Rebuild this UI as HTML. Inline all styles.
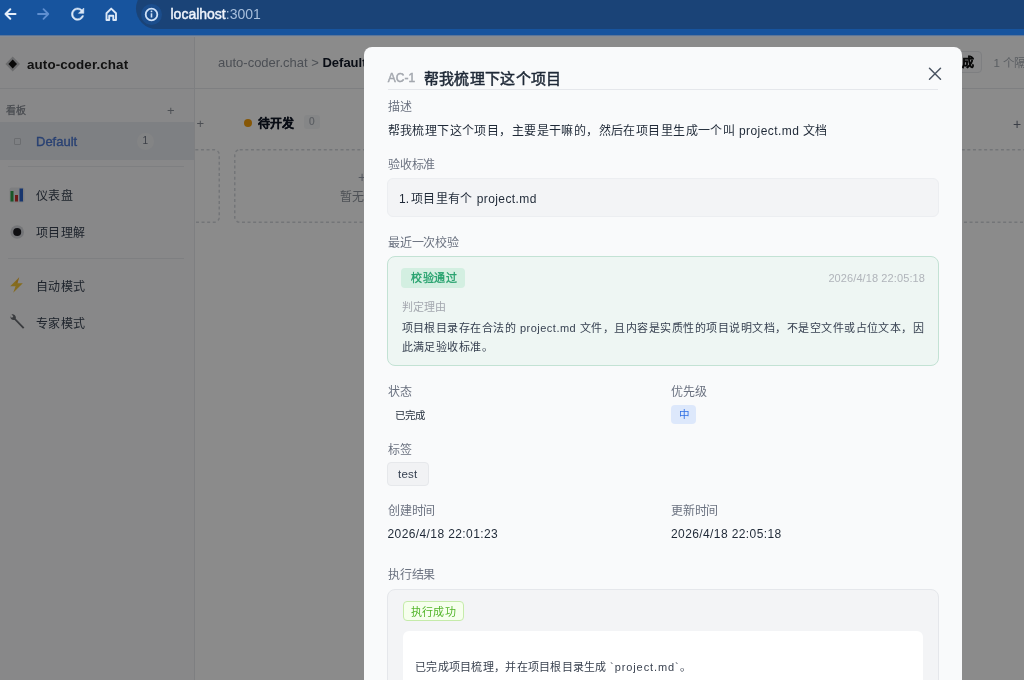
<!DOCTYPE html>
<html lang="zh-CN"><head><meta charset="utf-8">
<style>
*{box-sizing:border-box}
html,body{margin:0;padding:0}
body{width:1024px;height:680px;overflow:hidden;position:relative;font-family:"Liberation Sans",sans-serif;background:#fff}
.a{position:absolute;white-space:nowrap}
.g{will-change:transform}
.lb{font-size:12px;letter-spacing:-0.2px;line-height:14px;color:#6b7280}
</style></head><body><div class="g" style="position:absolute;left:0;top:0;width:1024px;height:680px;overflow:hidden">
<!-- toolbar -->
<div class="a" style="left:0;top:0;width:1024px;height:35px;background:#17549e"></div>
<div class="a" style="left:136px;top:-12px;width:920px;height:41px;background:#1a4377;border-radius:21px"></div>
<div class="a" style="left:141px;top:4px;width:21px;height:21px;border-radius:50%;background:#1b4d8c"></div>
<svg class="a" style="left:0;top:0" width="136" height="35" viewBox="0 0 136 35">
 <g fill="none" stroke="#e6effa" stroke-width="2" stroke-linecap="round" stroke-linejoin="round">
  <path d="M15.5 14H5.5M10.3 9.2L5.5 14L10.3 18.8"/>
 </g>
 <g fill="none" stroke="#5f8fd0" stroke-width="1.8" stroke-linecap="round" stroke-linejoin="round">
  <path d="M38 14H48.3M43.5 9.2L48.3 14L43.5 18.8"/>
 </g>
 <g transform="translate(68.4 4.9) scale(0.77)" fill="#dce8f7" stroke="#dce8f7" stroke-width="0.7">
  <path d="M17.65 6.35A7.958 7.958 0 0 0 12 4c-4.42 0-7.99 3.58-7.99 8s3.57 8 7.99 8c3.73 0 6.84-2.55 7.73-6h-2.08A5.99 5.99 0 0 1 12 18c-3.31 0-6-2.690-6-6s2.69-6 6-6c1.66 0 3.14.69 4.22 1.78L13 11h7V4l-2.35 2.35z" transform="rotate(0 12 12)"/>
 </g>
 <g fill="none" stroke="#dce8f7" stroke-width="1.9" stroke-linejoin="round">
  <path d="M106.5 20V13.2L111.2 8.6L116 13.2V20H113.3V15.8H109.2V20Z"/>
 </g>
</svg>
<svg class="a" style="left:141px;top:4px" width="21" height="21" viewBox="0 0 21 21">
 <circle cx="10.5" cy="10.5" r="5.8" fill="none" stroke="#cfe1f7" stroke-width="1.8"/>
 <rect x="9.7" y="9.3" width="1.6" height="4.2" fill="#cfe1f7"/>
 <circle cx="10.5" cy="7.4" r="0.9" fill="#cfe1f7"/>
</svg>
<div class="a" style="left:170.5px;top:6px;font-size:14px;line-height:17px;color:#eef3fb;-webkit-text-stroke:0.45px #eef3fb">localhost<span style="color:#a8bfdc;-webkit-text-stroke:0">:3001</span></div>

<!-- page main -->
<div class="a" style="left:0;top:35px;width:1024px;height:645px;background:#fdfdfd"></div>
<div class="a" style="left:195px;top:88px;width:829px;height:1px;background:#e5e7eb"></div>
<div class="a" style="left:218px;top:55px;font-size:13px;line-height:15px;color:#8b919b">auto-coder.chat &gt; <span style="color:#111827;font-weight:bold">Default</span></div>
<div class="a" style="left:930px;top:51px;width:52px;height:22px;border:1px solid #e5e7eb;border-radius:4px;background:#f9fafb"></div>
<div class="a" style="left:962px;top:55.5px;font-size:12px;line-height:15px;color:#111;font-weight:bold;-webkit-text-stroke:0.3px #111">成</div>
<div class="a" style="left:993.5px;top:56px;font-size:11.5px;line-height:14px;color:#a5abb3">1 个隔离</div>
<div class="a" style="left:196.5px;top:116.5px;font-size:13px;line-height:14px;color:#8b919a">+</div>
<svg class="a" style="left:100px;top:148.5px" width="120" height="74"><rect x="0.75" y="0.75" width="118.5" height="72.5" rx="5" fill="none" stroke="#d2d5da" stroke-width="1.5" stroke-dasharray="3 2.6"/></svg>
<div class="a" style="left:243.5px;top:118.5px;width:8.3px;height:8.3px;border-radius:50%;background:#f59e0b"></div>
<div class="a" style="left:257.5px;top:116.5px;font-size:12px;letter-spacing:0.3px;line-height:15px;color:#111827;font-weight:bold;-webkit-text-stroke:0.25px #111827">待开发</div>
<div class="a" style="left:304px;top:115px;width:15.5px;height:13.5px;border-radius:3px;background:#f3f4f6;font-size:10px;line-height:13.5px;text-align:center;color:#a5abb3;-webkit-text-stroke:0.2px #a5abb3">0</div>
<svg class="a" style="left:234px;top:148.5px" width="300" height="74"><rect x="0.75" y="0.75" width="298.5" height="72.5" rx="5" fill="none" stroke="#d2d5da" stroke-width="1.5" stroke-dasharray="3 2.6"/></svg>
<div class="a" style="left:340px;top:189.5px;font-size:12px;line-height:14px;color:#8e949d">暂无</div>
<div class="a" style="left:358px;top:170px;font-size:14px;line-height:14px;color:#9ca3af">+</div>
<div class="a" style="left:1013px;top:117px;font-size:14px;line-height:14px;color:#6b7280">+</div>
<svg class="a" style="left:900px;top:148.5px" width="300" height="74"><rect x="0.75" y="0.75" width="298.5" height="72.5" rx="5" fill="none" stroke="#d2d5da" stroke-width="1.5" stroke-dasharray="3 2.6"/></svg>

<!-- sidebar -->
<div class="a" style="left:0;top:35px;width:195px;height:645px;background:#f8f8f9;border-right:1px solid #e5e7eb"></div>
<div class="a" style="left:0;top:88px;width:194px;height:1px;background:#e5e7eb"></div>
<svg class="a" style="left:5px;top:56px" width="16" height="16" viewBox="0 0 16 16">
 <path d="M7.7 0.6L15 8L7.7 15.4L0.4 8Z" fill="#c4c5c8"/>
 <path d="M7.7 3.6L12 8L7.7 12.4L3.4 8Z" fill="#111"/>
</svg>
<div class="a" style="left:27px;top:56.5px;font-size:13.4px;line-height:16px;font-weight:bold;color:#222;letter-spacing:0.1px">auto-coder.chat</div>
<div class="a" style="left:5.5px;top:104.8px;font-size:10px;letter-spacing:0px;line-height:12px;color:#80868f;-webkit-text-stroke:0.25px #80868f">看板</div>
<div class="a" style="left:167px;top:104px;font-size:13px;line-height:14px;color:#8b919a">+</div>
<div class="a" style="left:0;top:122px;width:194px;height:38px;background:#e6e9ee"></div>
<div class="a" style="left:13.5px;top:138px;width:7px;height:7px;border:1px solid #c4c7cc;border-radius:1px"></div>
<div class="a" style="left:36px;top:134px;font-size:13px;line-height:15px;color:#4a76d0;-webkit-text-stroke:0.35px #4a76d0">Default</div>
<div class="a" style="left:137px;top:133px;width:16.5px;height:16.5px;border-radius:50%;background:#eff0f2;font-size:10px;line-height:16.5px;text-align:center;color:#6b7280">1</div>
<div class="a" style="left:8px;top:166px;width:176px;height:1px;background:#e5e7eb"></div>
<div class="a" style="left:36.3px;top:188.5px;font-size:12px;letter-spacing:0.2px;line-height:15px;color:#374151">仪表盘</div>
<div class="a" style="left:36.3px;top:226.4px;font-size:12px;letter-spacing:0.2px;line-height:15px;color:#374151">项目理解</div>
<div class="a" style="left:8px;top:258px;width:176px;height:1px;background:#e5e7eb"></div>
<div class="a" style="left:36.3px;top:279.7px;font-size:12px;letter-spacing:0.2px;line-height:15px;color:#374151">自动模式</div>
<div class="a" style="left:36.3px;top:316.8px;font-size:12px;letter-spacing:0.2px;line-height:15px;color:#374151">专家模式</div>
<svg class="a" style="left:9px;top:187px" width="16" height="16" viewBox="0 0 16 16">
 <rect x="0.5" y="0.5" width="15" height="15" rx="2" fill="#e4e6ea"/>
 <rect x="1.5" y="4" width="3" height="10.5" fill="#2e9e48"/>
 <rect x="6" y="8" width="3" height="6.5" fill="#c9302c"/>
 <rect x="10.5" y="1.5" width="3.5" height="13" fill="#2a62c9"/>
</svg>
<svg class="a" style="left:10px;top:225px" width="15" height="15" viewBox="0 0 15 15">
 <circle cx="7.2" cy="7" r="6.8" fill="#d3d5da"/>
 <circle cx="7.2" cy="7" r="4" fill="#1d1d22"/>
</svg>
<svg class="a" style="left:9px;top:276.5px" width="15" height="16" viewBox="0 0 15 16">
 <path d="M10.2 0.3L1.2 9.2H6.6L4.2 15.7L13.8 6.2H8.4Z" fill="#f3c53a"/>
 <path d="M10.2 0.3L6.6 5.5L8.4 6.2Z" fill="#f0a030" opacity="0.6"/>
</svg>
<svg class="a" style="left:8px;top:312.5px" width="18" height="18" viewBox="0 0 18 18">
 <path d="M2.2 2.5A3.6 3.6 0 0 0 6.6 6.9L15 15.8L16.4 14.4L7.8 5.8A3.6 3.6 0 0 0 3.4 1.3L5.3 3.3L4.5 4.6L2.6 4.4Z" fill="#6b6e74"/>
</svg>

<!-- overlay -->
<div class="a" style="left:0;top:35px;width:1024px;height:645px;background:rgba(0,0,0,0.45)"></div>
<div class="a" style="left:0;top:35px;width:1024px;height:1px;background:#5d7596"></div>
<div class="a" style="left:0;top:36px;width:1024px;height:1px;background:#838b96"></div>

<!-- modal -->
<div class="a" style="left:364px;top:47px;width:598px;height:700px;background:#f9fafb;border-radius:8px"></div>
<div class="a" style="left:387.8px;top:70.5px;font-size:12px;line-height:14px;color:#a3a7ae;-webkit-text-stroke:0.45px #a3a7ae;letter-spacing:0px">AC-1</div>
<div class="a" style="left:423.5px;top:70px;font-size:15px;line-height:18px;letter-spacing:0.35px;color:#1f2937;-webkit-text-stroke:0.5px #1f2937">帮我梳理下这个项目</div>
<svg class="a" style="left:928px;top:67px" width="14" height="14" viewBox="0 0 14 14"><path d="M1.5 1.2L12.5 12.2M12.5 1.2L1.5 12.2" stroke="#4b5563" stroke-width="1.5" fill="none" stroke-linecap="round"/></svg>
<div class="a" style="left:388px;top:89px;width:550px;height:1px;background:#e5e7eb"></div>

<div class="a lb" style="left:388px;top:100px">描述</div>
<div class="a" style="left:387.5px;top:123px;font-size:12px;letter-spacing:0.42px;line-height:16px;color:#1f2937">帮我梳理下这个项目，主要是干嘛的，然后在项目里生成一个叫 project.md 文档</div>

<div class="a lb" style="left:388px;top:158px">验收标准</div>
<div class="a" style="left:387px;top:178px;width:552px;height:39px;background:#f3f4f6;border:1px solid #eceef1;border-radius:6px"></div>
<div class="a" style="left:399px;top:190.5px;font-size:12px;letter-spacing:0.42px;line-height:16px;color:#1f2937"><span style="display:inline-block;width:11.8px;letter-spacing:0">1.</span>项目里有个 project.md</div>

<div class="a lb" style="left:388px;top:236px">最近一次校验</div>
<div class="a" style="left:387px;top:256px;width:552px;height:110px;background:#eef6f3;border:1px solid #c3e2d4;border-radius:8px"></div>
<div class="a" style="left:401px;top:268px;width:64px;height:20px;background:#d3efe1;border-radius:4px;font-size:11px;letter-spacing:0.5px;text-indent:2px;line-height:21px;text-align:center;color:#22a06b;-webkit-text-stroke:0.3px #22a06b">校验通过</div>
<div class="a" style="left:700px;width:225px;top:272px;font-size:11px;line-height:13px;color:#b0b4ba;text-align:right;letter-spacing:0.1px">2026/4/18 22:05:18</div>
<div class="a" style="left:401.5px;top:301px;font-size:11px;line-height:13px;color:#a3a7ae">判定理由</div>
<div class="a" style="left:401.5px;top:319px;font-size:11px;letter-spacing:0.49px;line-height:18.5px;color:#374151">项目根目录存在合法的 project.md 文件，且内容是实质性的项目说明文档，不是空文件或占位文本，因<br>此满足验收标准。</div>

<div class="a lb" style="left:388px;top:385px">状态</div>
<div class="a" style="left:395px;top:409px;font-size:10.5px;line-height:13px;color:#1f2937">已完成</div>
<div class="a lb" style="left:671px;top:385px">优先级</div>
<div class="a" style="left:671px;top:405px;width:25px;height:19px;background:#dde8fb;border-radius:4px;font-size:10.5px;line-height:19px;text-align:center;color:#2f6fe4">中</div>
<div class="a lb" style="left:388px;top:443px">标签</div>
<div class="a" style="left:387px;top:462px;width:41.5px;height:23.5px;background:#f1f2f4;border:1px solid #e6e8eb;border-radius:4px;font-size:11.5px;line-height:23px;text-align:center;color:#374151;letter-spacing:0.2px">test</div>
<div class="a lb" style="left:388px;top:504px">创建时间</div>
<div class="a" style="left:387.5px;top:527px;font-size:12px;line-height:15px;color:#1f2937;letter-spacing:0.4px">2026/4/18 22:01:23</div>
<div class="a lb" style="left:671px;top:504px">更新时间</div>
<div class="a" style="left:671px;top:527px;font-size:12px;line-height:15px;color:#1f2937;letter-spacing:0.4px">2026/4/18 22:05:18</div>

<div class="a lb" style="left:388px;top:568px">执行结果</div>
<div class="a" style="left:387px;top:588.5px;width:552px;height:120px;background:#f3f4f6;border:1px solid #e5e7eb;border-radius:8px"></div>
<div class="a" style="left:403px;top:600.5px;width:61px;height:20.5px;background:#f6ffed;border:1px solid #c5ebaa;border-radius:4px;font-size:11px;letter-spacing:0.4px;line-height:21px;text-align:center;color:#52b52a">执行成功</div>
<div class="a" style="left:402.5px;top:630.5px;width:520.5px;height:80px;background:#fff;border-radius:6px"></div>
<div class="a" style="left:415px;top:659.5px;font-size:11px;letter-spacing:0.28px;line-height:15px;color:#3a4250">已完成项目梳理，并在项目根目录生成 <span style="letter-spacing:0.9px">`project.md`</span>。</div>
</div></body></html>
